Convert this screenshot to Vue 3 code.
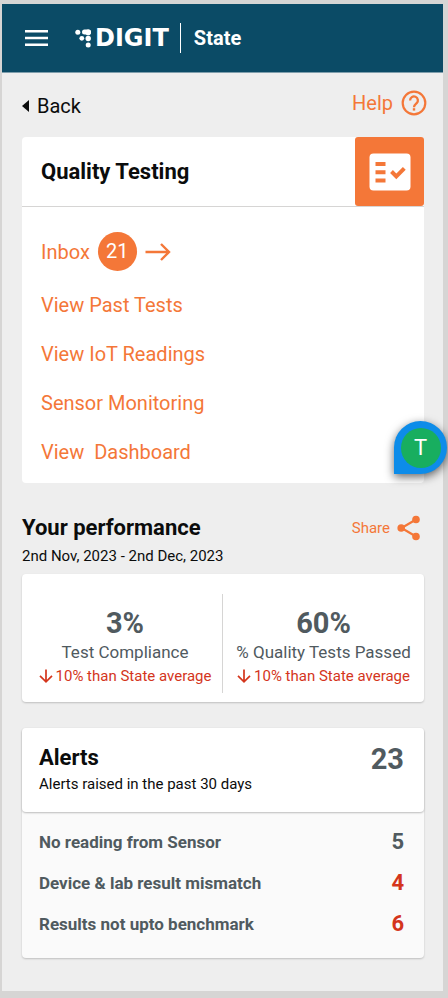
<script setup>
const links = ['View Past Tests', 'View IoT Readings', 'Sensor Monitoring', 'View  Dashboard']
const stats = [
  { value: '3%', label: 'Test Compliance', trend: '10% than State average' },
  { value: '60%', label: '% Quality Tests Passed', trend: '10% than State average' },
]
const alerts = [
  { label: 'No reading from Sensor', count: 5, critical: false },
  { label: 'Device & lab result mismatch', count: 4, critical: true },
  { label: 'Results not upto benchmark', count: 6, critical: true },
]
</script>

<template>
  <div class="frame">
    <div class="screen">
      <header class="topbar">
        <button class="menu" type="button" aria-label="Menu">
          <svg width="24" height="16" viewBox="0 0 24 16">
            <path d="M1 1.300h23M1 8h23M1 14.700h23" stroke="#fff" stroke-width="2.400" />
          </svg>
        </button>
        <a class="brand" href="#">
          <svg width="17" height="19" viewBox="0 0 17 19" fill="#fff">
            <circle cx="2.8" cy="3.2" r="2.5" />
            <rect x="7" y="0.6" width="9" height="5" rx="2.5" />
            <circle cx="13.2" cy="3.4" r="2.8" />
            <circle cx="6.8" cy="9.3" r="2.4" />
            <circle cx="13.2" cy="9.5" r="2.7" />
            <circle cx="13.2" cy="16" r="2.5" />
          </svg>
          <span class="brand-name">DIGIT</span>
        </a>
        <span class="tenant">State</span>
      </header>

      <main class="content">
        <nav class="toolbar">
          <a class="back" href="#">
            <svg width="7" height="12" viewBox="0 0 7 12"><path d="M7 0v12L0 6z" fill="#0b0c0c" /></svg>
            Back
          </a>
          <a class="help" href="#">
            Help
            <svg width="26" height="26" viewBox="0 0 26 26" fill="none" stroke="#f47738">
              <circle cx="13" cy="13" r="11.3" stroke-width="2.2" />
              <path d="M9.1 10.4a3.9 3.9 0 1 1 6.6 2.8c-1.4 1.3-2.7 1.9-2.7 4" stroke-width="2.3" />
              <path d="M13 18.2v2.4" stroke-width="2.4" />
            </svg>
          </a>
        </nav>

        <section class="card module">
          <div class="module-head">
            <h2>Quality Testing</h2>
            <div class="module-icon">
              <svg width="42" height="38" viewBox="0 0 42 38">
                <rect x="0.5" y="0.5" width="41" height="37" rx="4" fill="#fff" />
                <path d="M6.500 11h10M6.500 19.200h10M6.500 27.400h10" stroke="#f47738" stroke-width="4" />
                <path d="M22.500 18.500l4.800 4.800 8-8" fill="none" stroke="#f47738" stroke-width="4" />
              </svg>
            </div>
          </div>
          <div class="links">
            <a class="inbox" href="#">
              Inbox
              <span class="badge">21</span>
              <svg width="26" height="18" viewBox="0 0 26 18" fill="none" stroke="#f47738" stroke-width="2.400">
                <path d="M.5 9h23.500M16 1l8 8-8 8" />
              </svg>
            </a>
            <a v-for="link in links" :key="link" href="#">{{ link }}</a>
          </div>
          <button class="bubble" type="button"><span>T</span></button>
        </section>

        <section class="performance">
          <div class="section-head">
            <h2>Your performance</h2>
            <a class="share" href="#">
              Share
              <svg width="24" height="26" viewBox="0 0 24 26" fill="#f47738">
                <path d="M19 4.500L4.500 13L19 21.500" fill="none" stroke="#f47738" stroke-width="2.200" />
                <circle cx="19" cy="4.500" r="3.800" />
                <circle cx="4.200" cy="13" r="3.800" />
                <circle cx="19" cy="21.500" r="3.800" />
              </svg>
            </a>
          </div>
          <p class="small">2nd Nov, 2023 - 2nd Dec, 2023</p>
          <div class="card stats">
            <div v-for="stat in stats" :key="stat.label" class="stat">
              <strong>{{ stat.value }}</strong>
              <span class="stat-label">{{ stat.label }}</span>
              <span class="trend">
                <svg width="14" height="14" viewBox="0 0 14 14" fill="none" stroke="#d4351c" stroke-width="1.700">
                  <path d="M7 .5v12M1 6.800l6 6 6-6" />
                </svg>
                {{ stat.trend }}
              </span>
            </div>
          </div>
        </section>

        <section class="card alerts">
          <div class="alerts-head">
            <div>
              <h2>Alerts</h2>
              <p class="small">Alerts raised in the past 30 days</p>
            </div>
            <strong class="total">23</strong>
          </div>
          <ul>
            <li v-for="alert in alerts" :key="alert.label">
              <span>{{ alert.label }}</span>
              <span class="count" :class="{ critical: alert.critical }">{{ alert.count }}</span>
            </li>
          </ul>
        </section>
      </main>
    </div>
  </div>
</template>

<style>
body {
  background: #d6d5d4;
}
</style>

<style scoped>
.frame {
  padding: 4px 5px 7px 2px;
  font-family: Roboto, sans-serif;
  font-size: 20px;
  line-height: 24px;
  color: #0b0c0c;
}
.screen {
  background: #eeeeee;
  padding-bottom: 33px;
}
h2,
p,
ul {
  margin: 0;
  padding: 0;
}
a {
  color: #f47738;
  text-decoration: none;
}
button {
  border: 0;
  padding: 0;
  background: none;
  font: inherit;
}
svg {
  display: block;
  flex: none;
}
.topbar {
  display: flex;
  align-items: center;
  height: 68px;
  padding-left: 22px;
  background: #0b4b66;
  border-bottom: 1px solid #7f9eac;
  color: #fff;
}
.brand {
  display: flex;
  align-items: center;
  gap: 3px;
  margin-left: 27px;
  color: #fff;
}
.brand-name {
  font: bold 24px/28px "DejaVu Sans", sans-serif;
}
.tenant {
  margin-left: 11px;
  padding-left: 13px;
  border-left: 1px solid #fff;
  font-weight: 700;
  line-height: 30px;
}
.content {
  padding: 0 19px 0 20px;
}
.toolbar {
  display: flex;
  justify-content: space-between;
  align-items: center;
  height: 62px;
  padding-top: 2px;
}
.back {
  display: flex;
  align-items: center;
  gap: 8px;
  color: #0b0c0c;
}
.help {
  display: flex;
  align-items: center;
  gap: 8px;
  margin-right: -3px;
  padding-bottom: 6px;
}
.card {
  background: #fff;
  border-radius: 4px;
}
.module {
  position: relative;
}
.module-head {
  display: flex;
  justify-content: space-between;
  align-items: center;
  padding-left: 19px;
  border-bottom: 1px solid #d6d5d4;
}
h2 {
  font-size: 22px;
  line-height: 28px;
  font-weight: 700;
}
.module-icon {
  display: flex;
  align-items: center;
  justify-content: center;
  width: 69px;
  height: 69px;
  border-radius: 3px;
  background: #f47738;
}
.links {
  display: flex;
  flex-direction: column;
  align-items: flex-start;
  gap: 25px;
  padding: 25px 19px 19px;
  white-space: pre;
}
.inbox {
  display: flex;
  align-items: center;
  gap: 8px;
  margin-bottom: -3px;
  white-space: normal;
}
.badge {
  width: 39px;
  border-radius: 50%;
  background: #f47738;
  color: #fff;
  line-height: 39px;
  text-align: center;
}
.bubble {
  position: absolute;
  right: -23px;
  bottom: 9px;
  display: flex;
  align-items: center;
  justify-content: center;
  width: 53px;
  height: 53px;
  border-radius: 27px 27px 27px 0;
  background: #0d8ce9;
  box-shadow: 0 3px 10px rgba(0, 0, 0, 0.6);
}
.bubble span {
  width: 40px;
  border-radius: 50%;
  background: #18ae5f;
  color: #fff;
  font-size: 22px;
  line-height: 40px;
}
.performance {
  padding-top: 31px;
}
.section-head {
  display: flex;
  justify-content: space-between;
  align-items: center;
  margin-bottom: 2px;
}
.share {
  display: flex;
  align-items: center;
  gap: 7px;
  padding-right: 3px;
  font-size: 15px;
}
.small {
  font-size: 15px;
  line-height: 24px;
}
.stats {
  display: grid;
  grid-template-columns: 49fr 51fr;
  margin-top: 6px;
  padding: 20px 0 9px 6px;
  box-shadow: 0 1px 2px rgba(0, 0, 0, 0.2);
}
.stat {
  display: flex;
  flex-direction: column;
  align-items: center;
  padding: 12px 0 5px;
  color: #505a5f;
  white-space: nowrap;
}
.stat + .stat {
  border-left: 1px solid #d6d5d4;
}
.stat strong {
  font-size: 29px;
  line-height: 34px;
}
.stat-label {
  font-size: 17px;
  line-height: 24px;
}
.trend {
  display: flex;
  align-items: center;
  gap: 3px;
  color: #d4351c;
  font-size: 15px;
}
.alerts {
  margin-top: 26px;
  background: #fafafa;
  box-shadow: 0 1px 2px rgba(0, 0, 0, 0.2);
}
.alerts-head {
  display: flex;
  justify-content: space-between;
  padding: 16px 20px 16px 17px;
  border-radius: 4px;
  background: #fff;
  box-shadow: 0 1px 2px rgba(0, 0, 0, 0.25);
}
.total {
  font-size: 29px;
  line-height: 30px;
  color: #505a5f;
}
ul {
  display: flex;
  flex-direction: column;
  gap: 17px;
  padding: 18px 20px 22px 17px;
  list-style: none;
}
li {
  display: flex;
  justify-content: space-between;
  font-size: 17px;
  font-weight: 700;
  color: #505a5f;
}
.count {
  font-size: 22px;
}
.critical {
  color: #d4351c;
}
</style>
